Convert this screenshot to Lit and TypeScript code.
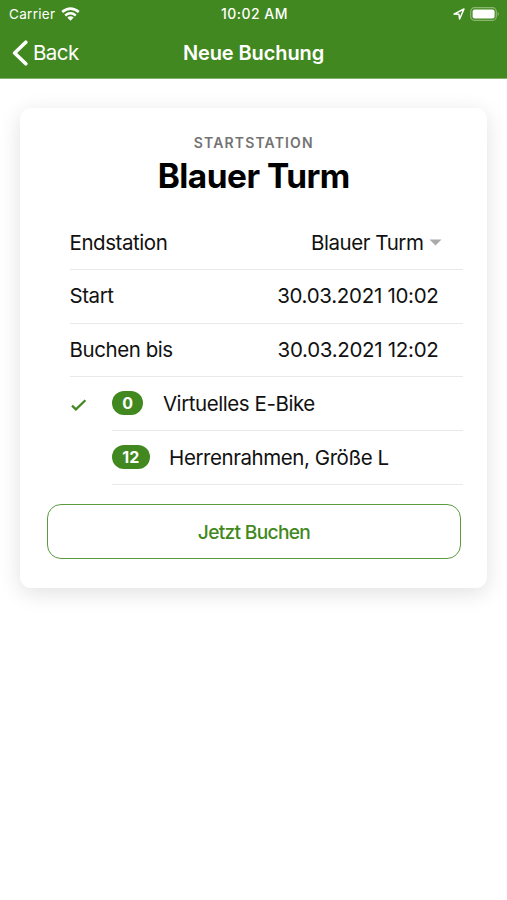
import { LitElement, html, css } from "lit";
import { customElement } from "lit/decorators.js";

@customElement("app-root")
export class AppRoot extends LitElement {
  static styles = css`
    :host {
      display: block;
      height: 900px;
      overflow: hidden;
      background: #fff;
      color: #111;
      font-family: Inter, "Liberation Sans", sans-serif;
      font-size: 20.5px;
      letter-spacing: -0.43px;
    }
    * { box-sizing: border-box; }
    svg { display: block; flex: none; }
    span, h1 { white-space: nowrap; }
    header {
      height: 79px;
      background: #428820;
      border-bottom: 1px solid #82b26c;
      color: #fff;
    }
    .status, .toolbar {
      display: grid;
      grid-template-columns: 1fr auto 1fr;
      align-items: center;
    }
    .status { height: 27px; padding: 0 7px 0 9px; font-size: 13.5px; }
    .left, .right { display: flex; align-items: center; }
    .right { justify-content: flex-end; gap: 5px; }
    .carrier { letter-spacing: 0.3px; margin-right: 5.5px; }
    .time { font-size: 14px; font-weight: 500; letter-spacing: 0.45px; }
    .toolbar { height: 51px; padding: 0 12px; }
    .back { margin-left: 5px; letter-spacing: -0.55px; }
    .title { font-weight: 600; font-size: 20px; letter-spacing: -0.1px; }
    .card {
      margin: 29px 20px 0;
      height: 480px;
      border-radius: 11px;
      background: #fff;
      box-shadow: 0 5px 22px rgba(0, 0, 0, 0.12);
      padding: 26px 24px 0 27px;
    }
    .heading { display: flex; flex-direction: column; align-items: center; height: 82px; padding-right: 2.5px; }
    .label { font-size: 14px; line-height: 18px; font-weight: 600; color: #737373; letter-spacing: 1.15px; }
    h1 { margin: 3px 0 0; font-size: 33.4px; line-height: 42px; font-weight: 700; color: #000; letter-spacing: -0.5px; }
    .row { display: flex; align-items: stretch; height: 53.8px; padding-left: 22.5px; }
    .line {
      display: flex;
      flex: 1;
      align-items: center;
      border-bottom: 1px solid #e9e9e9;
    }
    .row + .row .line { padding-bottom: 1px; }
    .value { margin-left: auto; margin-right: 24.5px; }
    .date { letter-spacing: -0.3px; }
    .select { margin-right: 5.5px; }
    .caret { margin-right: 21px; }
    .tick { display: flex; align-items: center; width: 42.5px; padding-top: 1px; }
    .badge {
      height: 24px;
      min-width: 30.5px;
      padding: 0 10.3px;
      margin-right: 19.5px;
      border-radius: 12px;
      background: #428820;
      color: #fff;
      font-size: 16px;
      line-height: 24px;
      font-weight: 700;
      letter-spacing: 0;
      text-align: center;
    }
    button {
      display: block;
      width: 414px;
      height: 55px;
      margin-top: 19.4px;
      padding: 1px 0 0;
      border: 1.4px solid #5c9a40;
      border-radius: 14px;
      background: #fff;
      color: #428820;
      font: 500 19.2px Inter, "Liberation Sans", sans-serif;
      letter-spacing: -0.7px;
    }
  `;

  private field(label: string, value: string) {
    return html`<div class="row"><div class="line">
      <span class="name">${label}</span><span class="value date">${value}</span>
    </div></div>`;
  }

  private bike(count: number, name: string, selected: boolean) {
    return html`<div class="row">
      <div class="tick">${selected
        ? html`<svg width="18" height="14" viewBox="0 0 18 14"><path d="M2 7.6 5.9 11.4 15.4 2.2" fill="none" stroke="#428820" stroke-width="2.2" /></svg>`
        : ""}</div>
      <div class="line"><span class="badge">${count}</span><span class="bike">${name}</span></div>
    </div>`;
  }

  render() {
    return html`
      <header>
        <div class="status">
          <div class="left">
            <span class="carrier">Carrier</span>
            <svg width="19" height="14" viewBox="0 0 19 14">
              <g fill="none" stroke="#fff" stroke-width="2.6">
                <path d="M1.2 5Q9.5-1.8 17.8 5" /><path d="M4.2 8.4Q9.5 4.1 14.8 8.4" />
              </g>
              <path d="M6.3 10.5Q9.5 8 12.7 10.5L9.5 13.8Z" fill="#fff" />
            </svg>
          </div>
          <span class="time">10:02 AM</span>
          <div class="right">
            <svg width="12" height="12" viewBox="0 0 12 12"><path d="M1 6.1 11 1 6.6 11 5.9 6.2Z" fill="none" stroke="#fff" stroke-width="1.5" stroke-linejoin="round" /></svg>
            <svg width="30" height="14" viewBox="0 0 30 14">
              <rect x=".7" y=".7" width="25.6" height="12.6" rx="3.8" fill="none" stroke="#8ab873" stroke-width="1.2" />
              <rect x="2.6" y="2.4" width="22" height="9.2" rx="2" fill="#fff" />
              <path d="M27.6 4.8Q30 7 27.6 9.2Z" fill="#8ab873" />
            </svg>
          </div>
        </div>
        <div class="toolbar">
          <div class="left">
            <svg width="16" height="26" viewBox="0 0 16 26"><path d="M13.8 2.2 2.6 13 13.8 23.8" fill="none" stroke="#fff" stroke-width="3.6" stroke-linecap="round" stroke-linejoin="round" /></svg>
            <span class="back">Back</span>
          </div>
          <span class="title">Neue Buchung</span>
          <div></div>
        </div>
      </header>
      <section class="card">
        <div class="heading"><span class="label">STARTSTATION</span><h1>Blauer Turm</h1></div>
        <div class="row"><div class="line">
          <span class="name">Endstation</span><span class="value select">Blauer Turm</span>
          <svg class="caret" width="13" height="7" viewBox="0 0 13 7"><path d="M.5.5h12L6.5 6.5Z" fill="#aaa" /></svg>
        </div></div>
        ${this.field("Start", "30.03.2021 10:02")}
        ${this.field("Buchen bis", "30.03.2021 12:02")}
        ${this.bike(0, "Virtuelles E-Bike", true)}
        ${this.bike(12, "Herrenrahmen, Größe L", false)}
        <button>Jetzt Buchen</button>
      </section>
    `;
  }
}
